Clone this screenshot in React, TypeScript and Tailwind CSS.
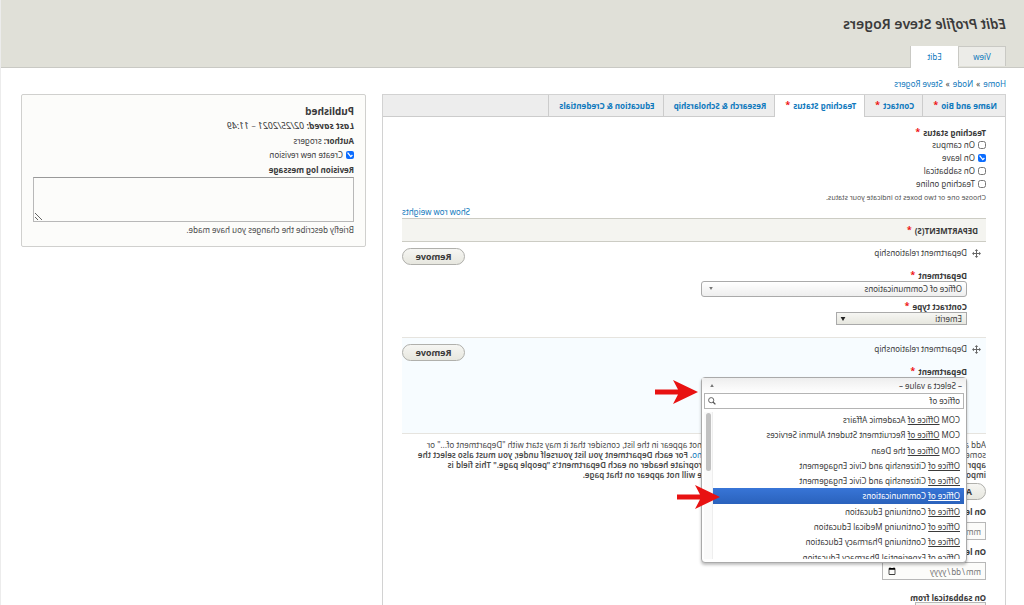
import React from 'react';

const link = 'text-[#0f79bd]';

function Required() {
  return <span className="relative -top-px ml-[3px] text-[9px] font-bold leading-none text-[#ee1111]">*</span>;
}

function Check({ id, label, checked }: { id: string; label: string; checked?: boolean }) {
  return (
    <div className="flex h-[13px] items-center gap-[3px]">
      <input id={id} type="checkbox" defaultChecked={checked} className="size-2 accent-[#0a6cff]" />
      <label htmlFor={id}>{label}</label>
    </div>
  );
}

function Triangle({ up, large }: { up?: boolean; large?: boolean }) {
  return (
    <svg viewBox="0 0 6 5" className={large ? 'h-1 w-[6px]' : 'h-[3px] w-1'} fill={large ? '#222' : '#777'}>
      <path d={up ? 'M0 5 3 0 6 5Z' : 'M0 0h6L3 5Z'} />
    </svg>
  );
}

function DragHandle() {
  return (
    <svg viewBox="0 0 9 9" className="size-[9px]" fill="#666">
      <path d="M4.5 0 6.2 2H5v2h2V2.8L9 4.5 7 6.2V5H5v2h1.2L4.5 9 2.8 7H4V5H2v1.2L0 4.5 2 2.8V4h2V2H2.8Z" />
    </svg>
  );
}

function Arrow({ className }: { className: string }) {
  return (
    <svg viewBox="0 0 43 24" className={`absolute h-6 w-[43px] ${className}`} fill="#e81212">
      <path d="M0 12 25 0 20 9.6H43V14.4H20L25 24Z" />
    </svg>
  );
}

function Row({ tinted, children }: { tinted?: boolean; children: React.ReactNode }) {
  return (
    <tr className={tinted ? 'bg-[#f7fcff]' : 'bg-white'}>
      <td className="h-24 border-b border-[#e6e4df] p-0 align-top">
        <div className="flex items-start justify-between pt-1">
          <div className="flex">
            <span className="flex w-[19px] justify-center pt-[3px]">
              <DragHandle />
            </span>
            <div>
              <div className="h-6">Department relationship</div>
              {children}
            </div>
          </div>
          <button
            type="button"
            className="mt-[2px] h-[17px] w-[63px] rounded-full border border-[#b0b0ac] bg-linear-to-b from-[#f6f6f3] to-[#e7e7df] text-[9px] leading-[14px] font-bold text-[#3a3a3a]"
          >
            Remove
          </button>
        </div>
      </td>
    </tr>
  );
}

const options = [
  ['COM ', ' Academic Affairs'],
  ['COM ', ' Recruitment Student Alumni Services'],
  ['COM ', ' the Dean'],
  ['', ' Citizenship and Civic Engagement'],
  ['', ' Citizenship and Civic Engagement'],
  ['', ' Communications'],
  ['', ' Continuing Education'],
  ['', ' Continuing Medical Education'],
  ['', ' Continuing Pharmacy Education'],
  ['', ' Experiential Pharmacy Education'],
];

function OpenChooser() {
  return (
    <div className="relative z-10 h-4 w-[266px]">
      <div className="absolute top-0 left-0 h-[186px] w-full rounded-t-sm rounded-b-sm border border-[#aaa] bg-white shadow-[0_2px_3px_rgba(0,0,0,0.25)]">
        <button
          type="button"
          aria-expanded="true"
          className="flex h-[15px] w-full items-center justify-between bg-linear-to-b from-[#eee] to-white px-1 pr-2 leading-[15px]"
        >
          – Select a value –
          <Triangle up />
        </button>
        <div className="mx-[2px] flex h-4 items-center border border-[#b4b4b4] bg-white px-[3px]">
          <input
            aria-label="Search departments"
            defaultValue="office of"
            className="min-w-0 flex-1 bg-transparent leading-[14px] outline-none"
          />
          <svg viewBox="0 0 8 8" className="size-2" fill="none" stroke="#555">
            <circle cx="4.8" cy="3.2" r="2.6" strokeWidth="0.9" />
            <path d="M3 5 0.6 7.4" strokeWidth="1.3" />
          </svg>
        </div>
        <div className="mx-[2px] mt-[3px] flex h-[147px] overflow-hidden">
          <ul role="listbox" aria-label="Department" className="flex h-[153px] flex-1 flex-col">
            {options.map(([before, after], i) => (
              <li
                key={i}
                role="option"
                aria-selected={i === 5}
                className={
                  i === 5
                    ? 'flex-1 bg-linear-to-b from-[#3875d7] to-[#2a62bc] px-1 leading-[15px] whitespace-pre text-white'
                    : 'flex-1 px-1 leading-[15px] whitespace-pre'
                }
              >
                {before}
                <span className="underline">Office of</span>
                {after}
              </li>
            ))}
          </ul>
          <div className="w-[9px] border-l border-[#eee] bg-[#fafafa] pt-px pl-px">
            <div className="h-[58px] w-[5px] rounded-full bg-[#c1c1c1]" />
          </div>
        </div>
      </div>
      <Arrow className="top-[3px] left-[269px]" />
      <Arrow className="top-[108px] left-[247px]" />
    </div>
  );
}

function DateField({ id, label }: { id: string; label: string }) {
  return (
    <div className="mb-[5px]">
      <label htmlFor={id} className="block h-[17px] leading-[13px] font-bold">
        {label}
      </label>
      <input
        id={id}
        type="date"
        className="block h-[18px] w-[104px] border border-[#b8b8b8] bg-[#fcfcfa] px-[3px] text-[#777]"
      />
    </div>
  );
}

const tabs = [
  { label: 'Name and Bio', required: true },
  { label: 'Contact', required: true },
  { label: 'Teaching Status', required: true, active: true },
  { label: 'Research & Scholarship' },
  { label: 'Education & Credentials' },
];

const help = [
  ['Add a', 'not appear in the list, consider that it may start with "Department of..." or'],
  ['some', ''],
  ['appr', 'ropriate header on each Department\'s "people page." This field is'],
  ['impo', 'e will not appear on that page.'],
];

export default function App() {
  return (
    <div className="h-screen -scale-x-100 overflow-hidden border-r border-[#ececec] bg-white font-['Noto_Sans','Open_Sans',sans-serif] text-[8px] leading-[13px] text-[#3a3a3a]">
      <header className="flex h-[68px] flex-col justify-between border-b border-[#c9c9c4] bg-[#e0e0d8] pl-[18px]">
        <h1 className="pt-[14px] text-[14px] leading-5 font-semibold">
          <em>Edit Profile</em> Steve Rogers
        </h1>
        <nav className="-mb-px flex">
          <a href="#view" className={`h-5 w-[48px] border border-b-0 border-[#c9c9c4] bg-[#ecece8] text-center leading-5 ${link}`}>
            View
          </a>
          <a href="#edit" className={`h-[22px] w-[48px] border-r border-[#c9c9c4] bg-white text-center leading-[22px] ${link}`}>
            Edit
          </a>
        </nav>
      </header>
      <nav className="flex h-[26px] gap-[3px] pt-[9px] pl-[18px]">
        <a href="#home" className={link}>Home</a>»
        <a href="#node" className={link}>Node</a>»
        <a href="#profile" className={link}>Steve Rogers</a>
      </nav>
      <div className="flex items-start gap-4 pr-5 pl-[18px]">
        <main className="min-w-0 flex-1 border border-[#d2d2d2]">
          <nav className="flex h-[22px] border-b border-[#ccc] bg-[#ededed]">
            {tabs.map((t) => (
              <a
                key={t.label}
                href="#tab"
                className={`border-r border-[#ccc] pr-[10px] pl-2 leading-[22px] font-bold ${link} ${t.active ? 'h-[22px] bg-white' : 'h-[21px]'}`}
              >
                {t.label}
                {t.required && <Required />}
              </a>
            ))}
          </nav>
          <div className="px-[19px] pt-[9px]">
            <fieldset>
              <legend className="h-3 font-bold">
                Teaching status
                <Required />
              </legend>
              <Check id="campus" label="On campus" />
              <Check id="leave" label="On leave" checked />
              <Check id="sabbatical" label="On sabbatical" />
              <Check id="online" label="Teaching online" />
              <p className="h-[15px] pt-px text-[7px] text-[#555]">Choose one or two boxes to indicate your status.</p>
            </fieldset>
            <div className="flex h-[13px] justify-end">
              <a href="#weights" className={link}>Show row weights</a>
            </div>
            <table className="w-full border-collapse">
              <thead>
                <tr>
                  <th className="h-[23px] border-y border-[#ccccc4] bg-[#f4f4f0] px-2 py-0 text-left font-bold">
                    DEPARTMENT(S)
                    <Required />
                  </th>
                </tr>
              </thead>
              <tbody>
                <Row>
                  <label htmlFor="department" className="block h-[11px] leading-[11px] font-bold">
                    Department
                    <Required />
                  </label>
                  <div className="relative w-[266px]">
                    <select
                      id="department"
                      className="block h-4 w-full appearance-none rounded-[3px] border border-[#aaa] bg-linear-to-b from-white to-[#eee] px-1 leading-[14px]"
                    >
                      <option>Office of Communications</option>
                    </select>
                    <span className="absolute top-[6px] right-2">
                      <Triangle />
                    </span>
                  </div>
                  <label htmlFor="contract" className="block h-[15px] pt-[3px] font-bold">
                    Contract type
                    <Required />
                  </label>
                  <div className="relative w-[131px]">
                    <select
                      id="contract"
                      className="block h-[13px] w-full appearance-none border border-[#aaa] bg-linear-to-b from-[#f6f6f3] to-[#e7e7df] px-1 leading-[11px]"
                    >
                      <option>Emeriti</option>
                    </select>
                    <span className="absolute top-[5px] right-1">
                      <Triangle large />
                    </span>
                  </div>
                </Row>
                <Row tinted>
                  <div className="h-[11px] leading-[11px] font-bold">
                    Department
                    <Required />
                  </div>
                  <OpenChooser />
                </Row>
              </tbody>
            </table>
            <div className="pt-1.5 leading-[10px] text-[#4a4a4a]">
              {help.map(([start, end], i) => (
                <p key={i} className={`flex whitespace-nowrap ${i > 1 ? 'font-semibold' : ''}`}>
                  <span className="w-[284px] shrink-0 overflow-hidden">{start}</span>
                  {i === 1 ? (
                    <span className="font-semibold">
                      <a href="#help" className={`font-normal ${link}`}>no</a>. For each Department you list yourself under, you must also select the
                    </span>
                  ) : (
                    <span>{end}</span>
                  )}
                </p>
              ))}
            </div>
            <button
              type="button"
              className="mt-[3px] mb-[5px] block h-[17px] rounded-full border border-[#b0b0ac] bg-linear-to-b from-[#f6f6f3] to-[#e7e7df] px-[13px] text-[9px] leading-[14px] font-bold"
            >
              Add another item
            </button>
            <DateField id="leave-from" label="On leave from" />
            <DateField id="leave-to" label="On leave to" />
            <label htmlFor="sabbatical-from" className="block h-[17px] pt-1.5 font-bold">
              On sabbatical from
            </label>
            <select id="sabbatical-from" className="block h-4 w-[71px] appearance-none border border-[#b8b8b8] bg-[#f4f4f0]" />
          </div>
        </main>
        <aside className="w-[345px] rounded-xs border border-[#d0d0ce] bg-[#fcfcfa] px-[11px] pt-2 pb-[10px]">
          <h2 className="h-4 text-[10px] leading-4 font-bold">Published</h2>
          <p className="h-[15px] text-[9px] italic">
            <b>Last saved:</b> 02/25/2021 – 11:49
          </p>
          <p className="h-[14px]">
            <b>Author:</b> srogers
          </p>
          <Check id="revision" label="Create new revision" checked />
          <label htmlFor="log" className="block h-4 pt-[2px] font-bold">
            Revision log message
          </label>
          <textarea id="log" className="block h-[45px] w-full border border-[#b8b8b8] border-t-[#999] bg-[#fcfcfa]" />
          <p className="pt-px text-[#4a4a4a]">Briefly describe the changes you have made.</p>
        </aside>
      </div>
    </div>
  );
}
